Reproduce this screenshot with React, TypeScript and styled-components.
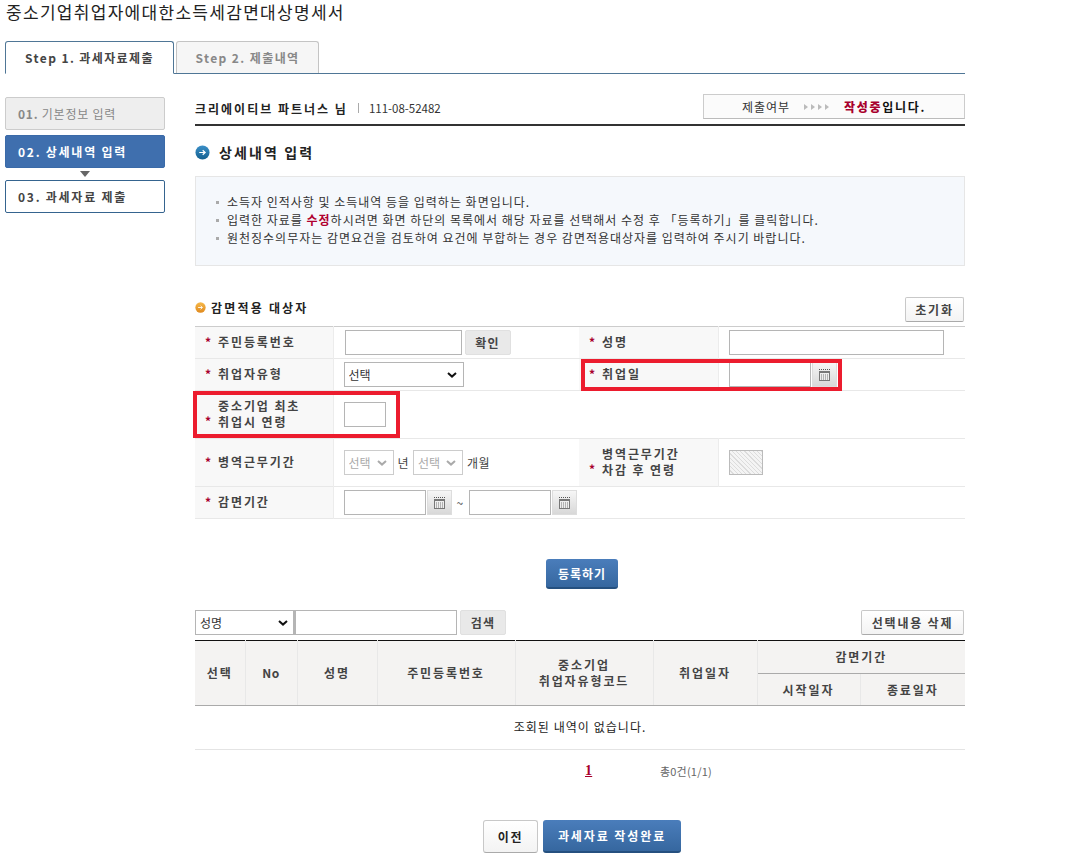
import { FC } from "react";
import styled, { createGlobalStyle, css } from "styled-components";

const FONT = `"Noto Sans CJK KR", "Noto Sans", "Liberation Sans", sans-serif`;

const GlobalStyle = createGlobalStyle`
  html, body { margin: 0; padding: 0; background: #fff; }
  body { font-family: ${FONT}; font-size: 12px; color: #333; }
  * { box-sizing: border-box; }
`;

const CalendarIcon: FC = () => (
  <svg width="11" height="12" viewBox="0 0 11 12" aria-hidden="true">
    <path d="M0 0.5h1M2 0.5h1M4 0.5h1M6 0.5h1M8 0.5h1M10 0.5h1" stroke="#555" />
    <rect x="0.5" y="2.5" width="10" height="9" fill="#eee" stroke="#777" />
    <rect x="1" y="3" width="9" height="1" fill="#777" />
    <path d="M2 6h7M2 8h7M2 10h7" stroke="#777" strokeDasharray="1 1" />
  </svg>
);

const BulletIcon: FC<{ size: number; from: string; to: string }> = ({ size, from, to }) => {
  const id = `bullet-${from.slice(1)}`;
  return (
    <svg width={size} height={size} viewBox="0 0 16 16" aria-hidden="true">
      <defs>
        <linearGradient id={id} x1="0" y1="0" x2="0" y2="1">
          <stop offset="0" stopColor={from} />
          <stop offset="1" stopColor={to} />
        </linearGradient>
      </defs>
      <circle cx="8" cy="8" r="7.5" fill={`url(#${id})`} />
      <path d="M4.5 8h6M8.2 5.6 10.8 8l-2.6 2.4" fill="none" stroke="#fff" strokeWidth="1.3" />
    </svg>
  );
};

const StepArrows: FC = () => (
  <svg width="26" height="8" viewBox="0 0 26 8" aria-hidden="true">
    <path d="M0 1l4 3-4 3zM7 1l4 3-4 3zM14 1l4 3-4 3zM21 1l4 3-4 3z" fill="#bbb" />
  </svg>
);

const Page = styled.div`
  width: 965px;
  height: 863px;
  padding-left: 5px;
  overflow: hidden;
`;

const Title = styled.h1`
  margin: 0;
  height: 41px;
  padding-left: 1px;
  font-size: 17px;
  line-height: 23px;
  font-weight: 400;
  letter-spacing: 1.3px;
  color: #222;
`;

const Tabs = styled.div`
  display: flex;
  gap: 2px;
  height: 33px;
  border-bottom: 1px solid #4f7696;
`;

const Tab = styled.div<{ $active?: boolean }>`
  height: 33px;
  border-radius: 3px 3px 0 0;
  font-size: 12px;
  font-weight: 700;
  line-height: 31px;
  text-align: center;
  letter-spacing: 1.4px;
  ${({ $active }) =>
    $active
      ? css`
          width: 169px;
          border: 1px solid #4f7696;
          border-bottom: 1px solid #fff;
          background: #fff;
          color: #444;
        `
      : css`
          width: 143px;
          height: 32px;
          border: 1px solid #c4c4c4;
          border-bottom: 0;
          background: #f6f6f6;
          color: #888;
        `}
`;

const Columns = styled.div`
  display: flex;
  gap: 30px;
  padding-top: 20px;
`;

const SideNav = styled.nav`
  width: 160px;
  padding-top: 3px;
  flex: none;
`;

const SideItem = styled.div<{ $state: "done" | "active" | "next" }>`
  height: 33px;
  padding-left: 12px;
  border-radius: 2px;
  font-size: 12px;
  line-height: 31px;
  letter-spacing: 1.75px;
  font-weight: 700;
  ${({ $state }) =>
    $state === "done" &&
    css`
      border: 1px solid #ccc;
      background: #eee;
      color: #888;
      margin-bottom: 5px;
      letter-spacing: 0.75px;
      span { font-weight: 400; }
    `}
  ${({ $state }) =>
    $state === "active" &&
    css`
      border: 1px solid #3a6aa8;
      background: #3f6fae;
      color: #fff;
    `}
  ${({ $state }) =>
    $state === "next" &&
    css`
      border: 1px solid #35648f;
      background: #fff;
      color: #444;
    `}
`;

const SideArrow = styled.div`
  width: 0;
  height: 0;
  margin: 3px auto 3px;
  border-left: 5px solid transparent;
  border-right: 5px solid transparent;
  border-top: 6px solid #666;
`;

const Main = styled.main`
  width: 770px;
  flex: none;
`;

const UserBar = styled.div`
  display: flex;
  align-items: flex-start;
  justify-content: space-between;
  height: 32px;
  border-bottom: 2px solid #333;
`;

const UserInfo = styled.div`
  display: flex;
  align-items: center;
  height: 25px;
  padding-top: 3px;
`;

const UserName = styled.strong`
  font-size: 12px;
  letter-spacing: 2px;
  color: #222;
`;

const UserSep = styled.span`
  width: 1px;
  height: 10px;
  margin: 0 10px;
  background: #aaa;
`;

const UserNo = styled.span`
  font-size: 11.5px;
  color: #333;
`;

const StatusBox = styled.div`
  display: flex;
  align-items: center;
  justify-content: center;
  gap: 14px;
  width: 262px;
  height: 25px;
  border: 1px solid #ccc;
  border-bottom-color: #bbb;
  background: #fbfbfb;
  color: #333;
`;

const StatusLabel = styled.span`
  letter-spacing: 1px;
`;

const StatusText = styled.strong`
  color: #111;
  letter-spacing: 1.7px;
  b { color: #a8002d; }
`;

const Heading = styled.h2`
  display: flex;
  align-items: center;
  gap: 9px;
  height: 50px;
  margin: 0;
  padding-top: 2px;
  font-size: 14px;
  font-weight: 700;
  letter-spacing: 2.1px;
  color: #222;
`;

const InfoBox = styled.ul`
  height: 90px;
  margin: 0 0 30px;
  padding: 16px 0 0 20px;
  list-style: none;
  border: 1px solid #e6e6e6;
  background: #f5f8fc;
`;

const InfoLine = styled.li`
  position: relative;
  height: 18px;
  padding-left: 11px;
  line-height: 18px;
  letter-spacing: 0.99px;
  color: #333;
  white-space: nowrap;
  &::before {
    content: "";
    position: absolute;
    left: 0;
    top: 8px;
    width: 3px;
    height: 3px;
    background: #aaa;
  }
  b { color: #b0002e; }
`;

const SectionBar = styled.div`
  display: flex;
  align-items: flex-start;
  justify-content: space-between;
  height: 30px;
  padding: 1px 1px 0 0;
`;

const SectionTitle = styled.h3`
  display: flex;
  align-items: center;
  gap: 5px;
  height: 21px;
  margin: 0;
  font-size: 12px;
  font-weight: 700;
  letter-spacing: 2.2px;
  color: #222;
`;

const PlainButton = styled.button<{ $width: number }>`
  width: ${({ $width }) => $width}px;
  height: 25px;
  padding: 0;
  border: 1px solid #c8c8c8;
  border-bottom-color: #aaa;
  border-radius: 2px;
  background: linear-gradient(#fff, #f3f3f3);
  font-family: ${FONT};
  font-size: 12px;
  font-weight: 700;
  letter-spacing: 1.8px;
  color: #444;
`;

const GreyButton = styled.button`
  width: 46px;
  height: 25px;
  margin-left: 3px;
  padding: 0;
  border: 1px solid #e0e0e0;
  border-radius: 2px;
  background: #e9e9e9;
  font-family: ${FONT};
  font-size: 12px;
  font-weight: 700;
  letter-spacing: 1.2px;
  color: #444;
`;

const FormWrap = styled.div`
  position: relative;
`;

const FormTable = styled.table`
  width: 770px;
  table-layout: fixed;
  border-collapse: collapse;
  border-top: 1px solid #ccc;
  border-bottom: 1px solid #ccc;
`;

const FormRow = styled.tr<{ $h: number }>`
  height: ${({ $h }) => $h}px;
  border-bottom: 1px solid #e8e8e8;
`;

const LabelCell = styled.th`
  position: relative;
  padding: 0 0 2px 23px;
  background: #f8f8f8;
  border-right: 1px solid #ececec;
  font-size: 12px;
  line-height: 16px;
  font-weight: 700;
  letter-spacing: 1.9px;
  text-align: left;
  color: #444;
`;

const Star = styled.i`
  position: absolute;
  left: 10px;
  bottom: calc(50% - 7px);
  font-style: normal;
  font-weight: 700;
  letter-spacing: 0;
  color: #a8002d;
  line-height: 16px;
`;

const TopLineStar = styled(Star)`
  bottom: 9px;
`;

const ValueCell = styled.td`
  padding: 0 0 0 10px;
  white-space: nowrap;
`;

const InlineRow = styled.div`
  display: flex;
  align-items: center;
`;

const TextInput = styled.input<{ $width: number; $nudge?: number }>`
  width: ${({ $width }) => $width}px;
  height: 25px;
  margin-left: ${({ $nudge }) => $nudge ?? 0}px;
  padding: 0 4px;
  border: 1px solid #b5b5b5;
  background: #fff;
  font-family: ${FONT};
`;

const SelectBox = styled.span<{ $width: number }>`
  position: relative;
  display: inline-flex;
  width: ${({ $width }) => $width}px;
  height: 25px;
  svg {
    position: absolute;
    right: 7px;
    top: 10px;
    pointer-events: none;
  }
`;

const NativeSelect = styled.select<{ $edge?: boolean }>`
  width: 100%;
  height: 25px;
  padding: 0 0 0 4px;
  appearance: none;
  border: 1px solid #b5b5b5;
  border-right-width: ${({ $edge }) => ($edge ? 2 : 1)}px;
  border-radius: 0;
  background: #fff;
  font-family: ${FONT};
  font-size: 12px;
  color: #333;
  &:disabled {
    border-color: #ccc;
    color: #aaa;
    opacity: 1;
  }
`;

const Select: FC<{ width: number; label: string; disabled?: boolean; edge?: boolean }> = ({
  width,
  label,
  disabled,
  edge,
}) => (
  <SelectBox $width={width}>
    <NativeSelect disabled={disabled} $edge={edge}>
      <option>{label}</option>
    </NativeSelect>
    <svg width="10" height="6" viewBox="0 0 10 6" aria-hidden="true">
      <path d="M1 1l4 3.6L9 1" fill="none" stroke={disabled ? "#aaa" : "#111"} strokeWidth="2" />
    </svg>
  </SelectBox>
);

const CalendarButton = styled.button`
  display: flex;
  align-items: center;
  justify-content: center;
  width: 25px;
  height: 25px;
  margin-left: 1px;
  padding: 0;
  border: 1px solid #ddd;
  background: linear-gradient(#f6f6f6, #d8d8d8);
`;

const Unit = styled.span<{ $gap?: number }>`
  margin: 0 ${({ $gap }) => $gap ?? 4}px;
  letter-spacing: 0.5px;
  color: #444;
`;

const Hatched = styled.div`
  width: 34px;
  height: 25px;
  border: 1px solid #bbb;
  background: repeating-linear-gradient(45deg, #f4f4f4, #f4f4f4 2px, #dcdcdc 2px, #dcdcdc 3px);
`;

const Highlight = styled.div<{ $left: number; $top: number; $w: number; $h: number }>`
  position: absolute;
  left: ${({ $left }) => $left}px;
  top: ${({ $top }) => $top}px;
  width: ${({ $w }) => $w}px;
  height: ${({ $h }) => $h}px;
  border: 4.5px solid #ec1c2e;
  pointer-events: none;
`;

const SubmitRow = styled.div`
  display: flex;
  justify-content: center;
  padding: 40px 0 21px 4px;
`;

const BlueButton = styled.button<{ $width: number }>`
  width: ${({ $width }) => $width}px;
  padding: 0;
  border: 0;
  border-bottom: 2px solid #25507f;
  border-radius: 3px;
  background: linear-gradient(#4a7dbb, #36679f);
  font-family: ${FONT};
  font-size: 12px;
  font-weight: 700;
  letter-spacing: 1px;
  color: #fff;
`;

const RegisterButton = styled(BlueButton)`
  height: 30px;
`;

const SearchBar = styled.div`
  display: flex;
  align-items: center;
  justify-content: space-between;
  padding-right: 1px;
  height: 25px;
`;

const SearchLeft = styled.div`
  display: flex;
  align-items: center;
`;

const ListTable = styled.table`
  width: 770px;
  margin-top: 5px;
  table-layout: fixed;
  border-collapse: collapse;
  border-top: 1px solid #111;
`;

const HeadRow = styled.tr<{ $h: number }>`
  height: ${({ $h }) => $h}px;
`;

const HeadCell = styled.th<{ $tight?: boolean }>`
  padding: 0;
  background: #f4f3f2;
  border-right: 1px solid #e8e8e8;
  border-bottom: 1px solid #aaa;
  font-size: 12px;
  font-weight: 700;
  line-height: 16px;
  letter-spacing: ${({ $tight }) => ($tight ? 0.5 : 1.9)}px;
  color: #444;
  &:last-child { border-right: 0; }
`;

const GroupCell = styled(HeadCell)`
  border-right: 0;
`;

const EmptyCell = styled.td`
  height: 44px;
  padding-bottom: 4px;
  border-bottom: 1px solid #e4e4e4;
  text-align: center;
  letter-spacing: 1.05px;
  color: #222;
`;

const Pager = styled.div`
  display: flex;
  height: 70px;
  padding: 13px 0 0 390px;
  font-size: 11px;
  letter-spacing: 0.2px;
  color: #666;
`;

const PageLink = styled.a`
  width: 75px;
  font-family: "Liberation Serif", serif;
  font-size: 14px;
  font-weight: 700;
  color: #a8002d;
  text-decoration: underline;
`;

const BottomActions = styled.div`
  display: flex;
  justify-content: center;
  gap: 5px;
  padding-left: 4px;
`;

const PrevButton = styled(PlainButton)`
  height: 33px;
  border-radius: 3px;
  color: #222;
`;

const CompleteButton = styled(BlueButton)`
  height: 33px;
  letter-spacing: 1.9px;
`;

const App: FC = () => {
  return (
    <Page>
      <GlobalStyle />
      <Title>중소기업취업자에대한소득세감면대상명세서</Title>
      <Tabs>
        <Tab $active>Step 1. 과세자료제출</Tab>
        <Tab>Step 2. 제출내역</Tab>
      </Tabs>
      <Columns>
        <SideNav>
          <SideItem $state="done">
            01. <span>기본정보 입력</span>
          </SideItem>
          <SideItem $state="active">02. 상세내역 입력</SideItem>
          <SideArrow />
          <SideItem $state="next">03. 과세자료 제출</SideItem>
        </SideNav>
        <Main>
          <UserBar>
            <UserInfo>
              <UserName>크리에이티브 파트너스 님</UserName>
              <UserSep />
              <UserNo>111-08-52482</UserNo>
            </UserInfo>
            <StatusBox>
              <StatusLabel>제출여부</StatusLabel>
              <StepArrows />
              <StatusText>
                <b>작성중</b>입니다.
              </StatusText>
            </StatusBox>
          </UserBar>
          <Heading>
            <BulletIcon size={15} from="#3b8fc8" to="#14608f" />
            상세내역 입력
          </Heading>
          <InfoBox>
            <InfoLine>소득자 인적사항 및 소득내역 등을 입력하는 화면입니다.</InfoLine>
            <InfoLine>
              입력한 자료를 <b>수정</b>하시려면 화면 하단의 목록에서 해당 자료를 선택해서 수정 후 「등록하기」를 클릭합니다.
            </InfoLine>
            <InfoLine>원천징수의무자는 감면요건을 검토하여 요건에 부합하는 경우 감면적용대상자를 입력하여 주시기 바랍니다.</InfoLine>
          </InfoBox>
          <SectionBar>
            <SectionTitle>
              <BulletIcon size={11} from="#f6b84a" to="#e08a1e" />
              감면적용 대상자
            </SectionTitle>
            <PlainButton $width={59}>초기화</PlainButton>
          </SectionBar>
          <FormWrap>
            <FormTable>
              <colgroup>
                <col width="138" />
                <col width="246" />
                <col width="139" />
                <col width="247" />
              </colgroup>
              <tbody>
                <FormRow $h={32}>
                  <LabelCell><Star>*</Star>주민등록번호</LabelCell>
                  <ValueCell>
                    <InlineRow>
                      <TextInput $width={117} $nudge={1} />
                      <GreyButton>확인</GreyButton>
                    </InlineRow>
                  </ValueCell>
                  <LabelCell><Star>*</Star>성명</LabelCell>
                  <ValueCell>
                    <TextInput $width={215} />
                  </ValueCell>
                </FormRow>
                <FormRow $h={32}>
                  <LabelCell><Star>*</Star>취업자유형</LabelCell>
                  <ValueCell>
                    <Select width={120} label="선택" />
                  </ValueCell>
                  <LabelCell><Star>*</Star>취업일</LabelCell>
                  <ValueCell>
                    <InlineRow>
                      <TextInput $width={82} />
                      <CalendarButton><CalendarIcon /></CalendarButton>
                    </InlineRow>
                  </ValueCell>
                </FormRow>
                <FormRow $h={48}>
                  <LabelCell><TopLineStar>*</TopLineStar>중소기업 최초<br />취업시 연령</LabelCell>
                  <ValueCell colSpan={3}>
                    <TextInput $width={42} />
                  </ValueCell>
                </FormRow>
                <FormRow $h={48}>
                  <LabelCell><Star>*</Star>병역근무기간</LabelCell>
                  <ValueCell>
                    <InlineRow>
                      <Select width={50} label="선택" disabled />
                      <Unit>년</Unit>
                      <Select width={50} label="선택" disabled />
                      <Unit>개월</Unit>
                    </InlineRow>
                  </ValueCell>
                  <LabelCell><TopLineStar>*</TopLineStar>병역근무기간<br />차감 후 연령</LabelCell>
                  <ValueCell>
                    <Hatched />
                  </ValueCell>
                </FormRow>
                <FormRow $h={32}>
                  <LabelCell><Star>*</Star>감면기간</LabelCell>
                  <ValueCell colSpan={3}>
                    <InlineRow>
                      <TextInput $width={82} />
                      <CalendarButton><CalendarIcon /></CalendarButton>
                      <Unit $gap={5}>~</Unit>
                      <TextInput $width={82} />
                      <CalendarButton><CalendarIcon /></CalendarButton>
                    </InlineRow>
                  </ValueCell>
                </FormRow>
              </tbody>
            </FormTable>
            <Highlight $left={-2} $top={65} $w={207} $h={47} />
            <Highlight $left={386} $top={33} $w={261} $h={32} />
          </FormWrap>
          <SubmitRow>
            <RegisterButton $width={72}>등록하기</RegisterButton>
          </SubmitRow>
          <SearchBar>
            <SearchLeft>
              <Select width={100} label="성명" edge />
              <TextInput $width={162} />
              <GreyButton>검색</GreyButton>
            </SearchLeft>
            <PlainButton $width={103}>선택내용 삭제</PlainButton>
          </SearchBar>
          <ListTable>
            <colgroup>
              <col width="50" />
              <col width="52" />
              <col width="80" />
              <col width="138" />
              <col width="138" />
              <col width="104" />
              <col width="103" />
              <col width="105" />
            </colgroup>
            <thead>
              <HeadRow $h={33}>
                <HeadCell rowSpan={2}>선택</HeadCell>
                <HeadCell rowSpan={2} $tight>No</HeadCell>
                <HeadCell rowSpan={2}>성명</HeadCell>
                <HeadCell rowSpan={2}>주민등록번호</HeadCell>
                <HeadCell rowSpan={2}>중소기업<br />취업자유형코드</HeadCell>
                <HeadCell rowSpan={2}>취업일자</HeadCell>
                <GroupCell colSpan={2}>감면기간</GroupCell>
              </HeadRow>
              <HeadRow $h={32}>
                <HeadCell>시작일자</HeadCell>
                <HeadCell>종료일자</HeadCell>
              </HeadRow>
            </thead>
            <tbody>
              <tr>
                <EmptyCell colSpan={8}>조회된 내역이 없습니다.</EmptyCell>
              </tr>
            </tbody>
          </ListTable>
          <Pager>
            <PageLink>1</PageLink>
            <span>총0건(1/1)</span>
          </Pager>
          <BottomActions>
            <PrevButton $width={55}>이전</PrevButton>
            <CompleteButton $width={138}>과세자료 작성완료</CompleteButton>
          </BottomActions>
        </Main>
      </Columns>
    </Page>
  );
};

export default App;
